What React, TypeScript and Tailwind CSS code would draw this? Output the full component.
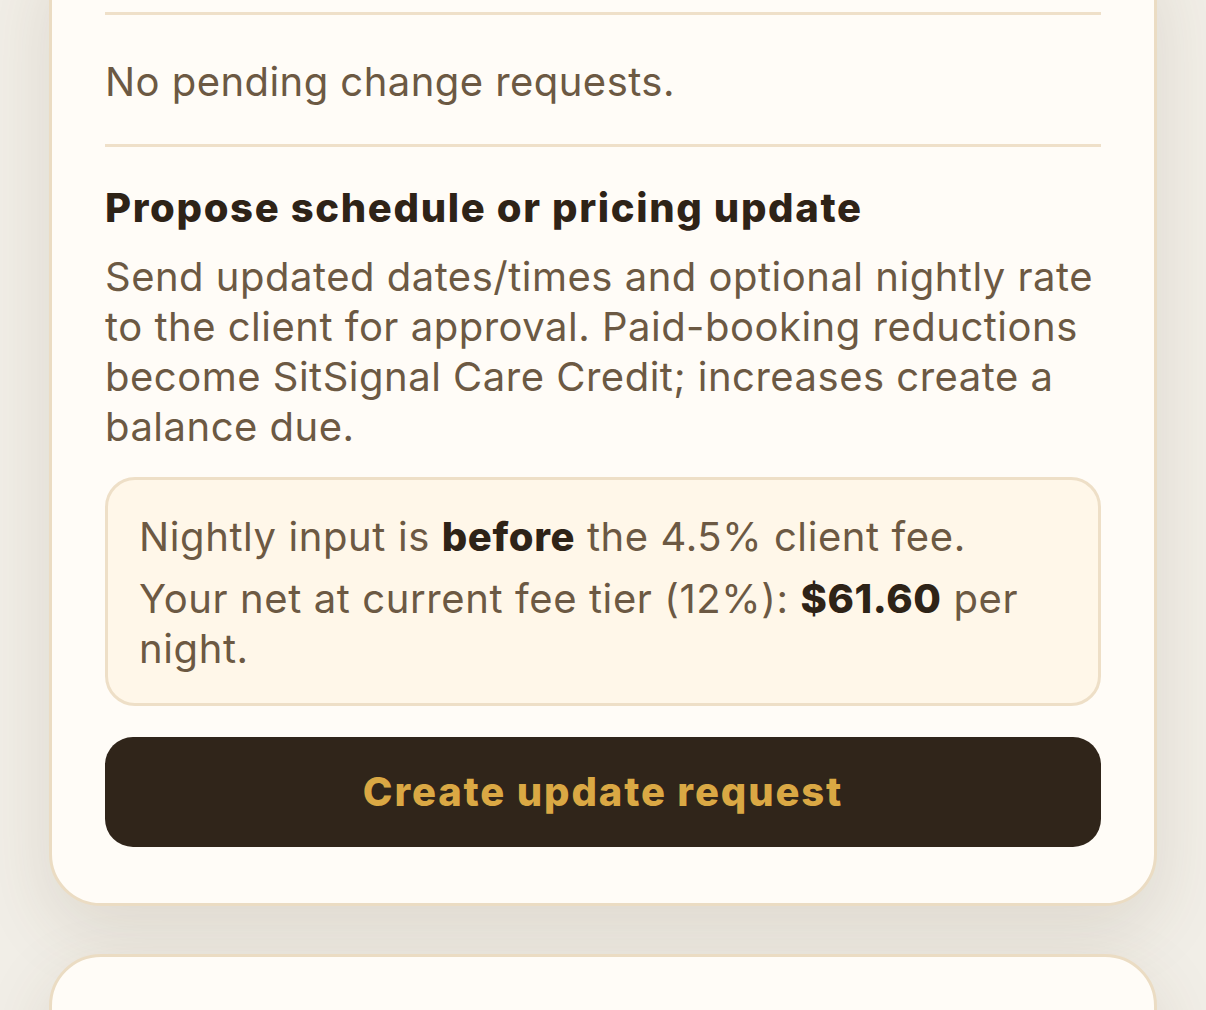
export default function App() {
	const font = { fontFamily: "Inter, 'Noto Sans', sans-serif" };

	return (
		<div
			className="min-h-screen overflow-hidden bg-[#f1eee7] px-[49px] flex flex-col gap-[48px]"
			style={font}
		>
			<div className="-mt-[60px] rounded-[52px] border-[3px] border-[#ebdcc3] bg-[#fffcf7] px-[53px] pt-[69px] pb-[56px] shadow-[0_24px_70px_rgba(90,70,40,0.13)]">
				<div className="h-[3px] bg-[#efe0c9]" />

				<p className="mt-[42px] text-[40px] leading-[50px] text-[#6c5943] tracking-[0.45px]">
					No pending change requests.
				</p>

				<div className="mt-[37px] h-[3px] bg-[#efe0c9]" />

				<h3 className="mt-[36px] text-[40px] leading-[50px] font-extrabold text-[#2e2317] tracking-[1.65px]">
					Propose schedule or pricing update
				</h3>

				<p className="mt-[19px] text-[40px] leading-[50px] text-[#6c5943] tracking-[0.5px]">
					Send updated dates/times and optional nightly rate to the client for approval.
					Paid-booking reductions become SitSignal Care Credit; increases create a balance due.
				</p>

				<div className="mt-[25px] rounded-[30px] border-[3px] border-[#eedfc7] bg-[#fff7e9] px-[31px] pt-[32px] pb-[29px] text-[40px] leading-[50px] text-[#6c5943] tracking-[0.6px]">
					<p>
						Nightly input is <strong className="font-extrabold text-[#2e2317]">before</strong> the
						4.5% client fee.
					</p>
					<p className="mt-[12px]">
						Your net at current fee tier (12%):{" "}
						<strong className="font-extrabold text-[#2e2317]">$61.60</strong> per night.
					</p>
				</div>

				<button className="mt-[31px] flex h-[110px] w-full items-center justify-center rounded-[28px] bg-[#30251a] text-[40px] font-extrabold tracking-[1.85px] text-[#daa844]">
					Create update request
				</button>
			</div>

			<div className="h-[200px] rounded-[52px] border-[3px] border-[#ebdcc3] bg-[#fffcf7] shadow-[0_24px_70px_rgba(90,70,40,0.13)]" />
		</div>
	);
}
